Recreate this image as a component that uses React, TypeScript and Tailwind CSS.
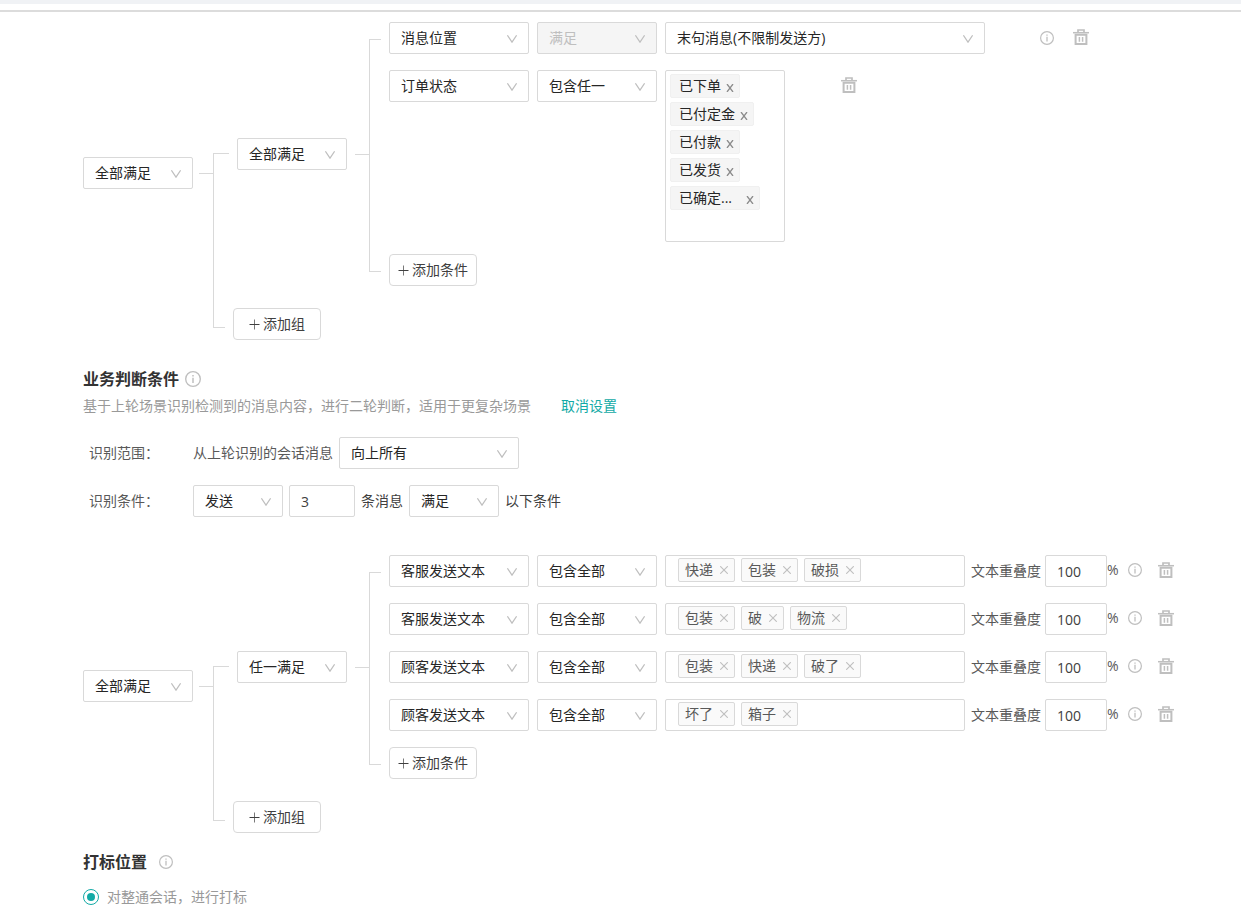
import React, { useState } from "react"
import { clsx } from "clsx"

const orderStates = [
  { name: "已下单" },
  { name: "已付定金" },
  { name: "已付款" },
  { name: "已发货" },
  { name: "已确定...", truncated: true },
]

const keywordRules = [
  { source: "客服发送文本", keywords: ["快递", "包装", "破损"] },
  { source: "客服发送文本", keywords: ["包装", "破", "物流"] },
  { source: "顾客发送文本", keywords: ["包装", "快递", "破了"] },
  { source: "顾客发送文本", keywords: ["坏了", "箱子"] },
]

/* Icons */
function InfoIcon({ className }: { className: string }) {
  return (
    <svg viewBox="0 0 14 14" className={clsx("block text-[#bfbfbf]", className)} fill="none" stroke="currentColor">
      <circle cx="7" cy="7" r="6.4" strokeWidth="1.2" />
      <path d="M7 5.8v4.6M7 3.4v1.4" strokeWidth="1.3" />
    </svg>
  )
}

function TrashIcon() {
  return (
    <svg viewBox="0 0 16 16" className="block size-4" fill="none" stroke="currentColor">
      <path d="M0 3.7h16" strokeWidth="1.5" />
      <path d="M5 3V1h6v2" strokeWidth="1.7" />
      <path d="M2.6 5.8h10.8v9.2H2.6z" strokeWidth="2" />
      <path d="M6.4 8v4.8M9.6 8v4.8" strokeWidth="1.5" />
    </svg>
  )
}

function CloseIcon() {
  return (
    <svg viewBox="0 0 8 8" className="block size-2" fill="none" stroke="currentColor" strokeWidth="1.1">
      <path d="M.2.2l7.6 7.6M7.8.2L.2 7.8" />
    </svg>
  )
}

function NarrowCloseIcon() {
  return (
    <svg viewBox="0 0 8 8" className="block size-2" fill="none" stroke="currentColor" strokeWidth="1.3">
      <path d="M1 0l6 8M7 0L1 8" />
    </svg>
  )
}

function PlusIcon() {
  return (
    <svg viewBox="0 0 11 11" className="block size-[11px]" fill="none" stroke="currentColor" strokeWidth="1">
      <path d="M5.5 .5v10" strokeOpacity="0.7" />
      <path d="M.5 5.5h10" />
    </svg>
  )
}

/* Form controls */
interface SelectProps {
  label: string
  value: string
  className: string
  disabled?: boolean
}

function Select({ label, value, className, disabled }: SelectProps) {
  return (
    <div className={clsx("relative h-8 shrink-0", className)}>
      <select
        aria-label={label}
        disabled={disabled}
        className="block h-8 w-full appearance-none rounded-xs border border-[#d9d9d9] bg-white pr-7 pl-[11px] text-[#262626] disabled:bg-[#f5f5f5] disabled:text-[#bfbfbf] disabled:opacity-100"
      >
        <option>{value}</option>
      </select>
      <svg
        viewBox="0 0 10 8"
        className="pointer-events-none absolute top-[13px] right-3 h-2 w-2.5"
        fill="none"
        stroke="#bfbfbf"
        strokeWidth="1.2"
      >
        <path d="M.4.3L5 7.2 9.6.3" />
      </svg>
    </div>
  )
}

function NumberInput({ label, initial, className }: { label: string; initial: string; className: string }) {
  const [value, setValue] = useState(initial)
  return (
    <input
      type="text"
      aria-label={label}
      value={value}
      onChange={(e) => setValue(e.target.value)}
      className={clsx(
        "block h-8 shrink-0 rounded-xs border border-[#d9d9d9] bg-white px-[11px] text-[#404040]",
        className
      )}
    />
  )
}

function AddButton({ children, className }: { children: React.ReactNode; className?: string }) {
  return (
    <button
      type="button"
      className={clsx(
        "flex h-8 w-[88px] shrink-0 items-center justify-center gap-[3px] rounded-sm border border-[#d9d9d9] bg-white text-[#404040]",
        className
      )}
    >
      <PlusIcon />
      {children}
    </button>
  )
}

function DeleteButton({ className }: { className: string }) {
  return (
    <button type="button" aria-label="删除" className={clsx("shrink-0 text-[#bfbfbf]", className)}>
      <TrashIcon />
    </button>
  )
}

/* Tree: root select -> group select -> condition rows */
interface ConditionTreeProps {
  root: string
  group: string
  children: React.ReactNode
}

function ConditionTree({ root, group, children }: ConditionTreeProps) {
  return (
    <div className="flex">
      <div className="flex shrink-0 items-center pb-4">
        <Select label="组关系" value={root} className="w-[110px]" />
        <div className="ml-1.5 h-px w-3.5 bg-[#d9d9d9]" />
      </div>

      <div className="grow">
        <div className="flex">
          {/* Upper branch */}
          <div className="flex w-4 shrink-0 flex-col">
            <div className="h-1/2 border-b border-[#d9d9d9]" />
            <div className="h-1/2 border-l border-[#d9d9d9]" />
          </div>

          <div className="ml-2 flex shrink-0 items-center">
            <Select label="条件关系" value={group} className="w-[110px]" />
            <div className="ml-2 h-px w-3.5 bg-[#d9d9d9]" />
          </div>

          <div className="mt-[17px] mr-2 mb-3.5 w-3 shrink-0 border-y border-l border-[#d9d9d9]" />

          <div className="flex grow flex-col gap-4">
            {children}
            <AddButton>添加条件</AddButton>
          </div>
        </div>

        {/* Lower branch */}
        <div className="flex">
          <div className="mr-2 h-[42px] w-3 shrink-0 border-b border-l border-[#d9d9d9]" />
          <AddButton className="mt-[22px]">添加组</AddButton>
        </div>
      </div>
    </div>
  )
}

function OrderStateBox() {
  return (
    <div className="-mb-1 flex h-[172px] w-[120px] shrink-0 flex-col items-start gap-1 rounded-xs border border-[#d9d9d9] py-[3px] pl-1">
      {orderStates.map((state) => (
        <span
          key={state.name}
          className="flex h-6 items-center rounded-xs border border-[#f0f0f0] bg-[#f5f5f5] pr-[5px] pl-2 text-[#262626]"
        >
          {state.name}
          <button
            type="button"
            aria-label={`移除${state.name}`}
            className={clsx("pt-1 text-[#8c8c8c]", state.truncated ? "ml-3.5" : "ml-[5px]")}
          >
            <NarrowCloseIcon />
          </button>
        </span>
      ))}
    </div>
  )
}

function KeywordRow({ source, keywords }: { source: string; keywords: string[] }) {
  return (
    <div className="flex items-center">
      <Select label="文本来源" value={source} className="w-[140px]" />
      <Select label="匹配方式" value="包含全部" className="ml-2 w-[120px]" />
      <div className="ml-2 flex h-8 w-[300px] shrink-0 items-start gap-1.5 rounded-xs border border-[#d9d9d9] px-3 pt-0.5">
        {keywords.map((word) => (
          <span
            key={word}
            className="flex h-6 items-center gap-[7px] rounded-xs border border-[#d9d9d9] bg-[#fafafa] px-1.5 text-[#595959]"
          >
            {word}
            <button type="button" aria-label={`移除${word}`} className="text-[#bfbfbf]">
              <CloseIcon />
            </button>
          </span>
        ))}
      </div>
      <span className="ml-1.5 shrink-0 text-[#595959]">文本重叠度</span>
      <NumberInput label="文本重叠度" initial="100" className="ml-1 w-[62px]" />
      <div className="flex shrink-0 items-center pb-0.5">
        <span className="w-[21px] text-[#595959]">%</span>
        <InfoIcon className="size-3.5" />
        <DeleteButton className="ml-4" />
      </div>
    </div>
  )
}

export default function App() {
  return (
    <div className="min-h-screen bg-white font-['Open_Sans','Noto_Sans_CJK_SC',sans-serif] text-sm leading-[22px]">
      <header className="h-3 border-t-4 border-b-2 border-t-[#f0f2f5] border-b-[#dcdcdc]" />

      <main className="pt-2.5 pl-[83px]">
        <ConditionTree root="全部满足" group="全部满足">
          <div className="flex items-start">
            <Select label="条件类型" value="消息位置" className="w-[140px]" />
            <Select label="匹配方式" value="满足" disabled className="ml-2 w-[120px]" />
            <Select label="消息位置" value="末句消息(不限制发送方)" className="ml-2 w-80" />
            <InfoIcon className="mt-[9px] ml-[55px] size-3.5 shrink-0" />
            <DeleteButton className="mt-[7px] ml-[19px]" />
          </div>
          <div className="flex items-start">
            <Select label="条件类型" value="订单状态" className="w-[140px]" />
            <Select label="匹配方式" value="包含任一" className="mr-2 ml-2 w-[120px]" />
            <OrderStateBox />
            <DeleteButton className="mt-[7px] ml-14" />
          </div>
        </ConditionTree>

        <h2 className="mt-[27px] flex h-6 items-center gap-1.5 text-base font-bold text-[#333]">
          业务判断条件
          <InfoIcon className="size-4" />
        </h2>
        <p className="mt-1 text-[#999]">
          基于上轮场景识别检测到的消息内容，进行二轮判断，适用于更复杂场景
          <a href="#cancel" className="ml-[30px] text-[#13aaa6]">
            取消设置
          </a>
        </p>

        <div className="mt-5 flex flex-col gap-4 pl-1.5 text-[#595959]">
          <div className="flex items-center gap-1.5">
            <span className="w-[98px] shrink-0">识别范围：</span>
            <span>从上轮识别的会话消息</span>
            <Select label="识别范围" value="向上所有" className="w-[180px]" />
          </div>
          <div className="flex items-center gap-1.5">
            <span className="w-[98px] shrink-0">识别条件：</span>
            <Select label="动作" value="发送" className="w-[90px]" />
            <NumberInput label="消息条数" initial="3" className="w-[66px]" />
            <span className="text-[#404040]">条消息</span>
            <Select label="满足关系" value="满足" className="w-[90px]" />
            <span className="text-[#404040]">以下条件</span>
          </div>
        </div>

        <div className="mt-[38px]">
          <ConditionTree root="全部满足" group="任一满足">
            {keywordRules.map((rule, index) => (
              <KeywordRow key={index} source={rule.source} keywords={rule.keywords} />
            ))}
          </ConditionTree>
        </div>

        <h2 className="mt-[17px] flex h-6 items-center gap-3 text-base font-bold text-[#333]">
          打标位置
          <InfoIcon className="size-3.5" />
        </h2>
        <label className="mt-3 flex items-center gap-2 text-[#999]">
          <input
            type="radio"
            name="mark-position"
            defaultChecked
            className="size-4 appearance-none rounded-full border border-[#d9d9d9] bg-white bg-clip-content p-[3px] checked:border-[#13aaa6] checked:bg-[#13aaa6]"
          />
          对整通会话，进行打标
        </label>
      </main>
    </div>
  )
}
